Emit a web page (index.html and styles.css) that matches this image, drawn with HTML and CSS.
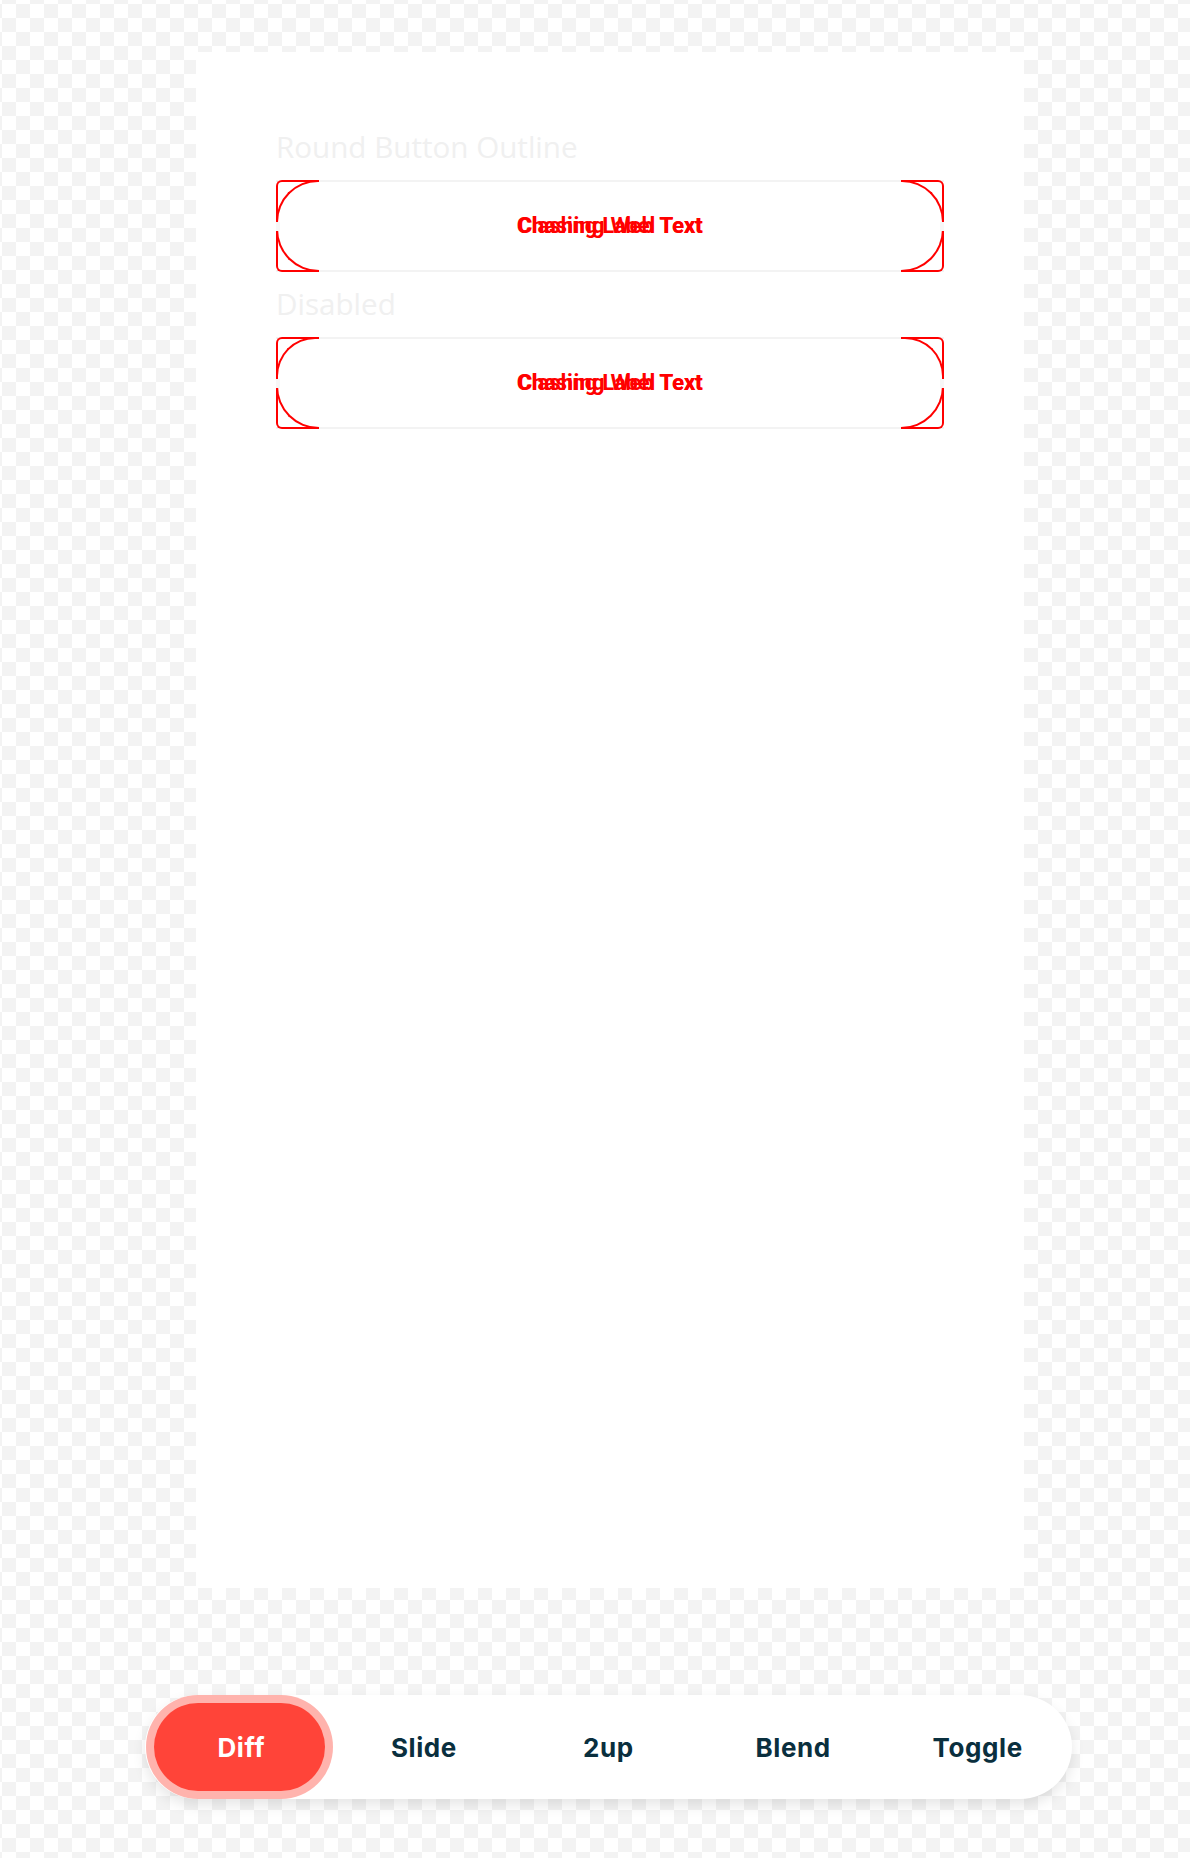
FILE: index.html
```html
<!DOCTYPE html>
<html lang="en">
<head>
<meta charset="utf-8">
<title>Round Button Outline – Diff</title>
<link rel="stylesheet" href="styles.css">
</head>
<body>
  <main class="stage">
    <section class="panel">
      <div class="label">Round Button Outline</div>
      <div class="btn">
        <span class="cap cap-l"><span class="gap"></span></span>
        <span class="cap cap-r"><span class="gap"></span></span>
        <span class="btn-text"><span>Clashing Web Text</span><span class="alt">Chasing Label Text</span></span>
      </div>
      <div class="label">Disabled</div>
      <div class="btn btn-disabled">
        <span class="cap cap-l"><span class="gap"></span></span>
        <span class="cap cap-r"><span class="gap"></span></span>
        <span class="btn-text"><span>Clashing Web Text</span><span class="alt">Chasing Label Text</span></span>
      </div>
    </section>
    <nav class="toolbar">
      <div class="tab tab-active">Diff</div>
      <div class="tab">Slide</div>
      <div class="tab">2up</div>
      <div class="tab">Blend</div>
      <div class="tab">Toggle</div>
    </nav>
  </main>
</body>
</html>
```
FILE: styles.css
```css
html {
  background-color: #ffffff;
  background-image: conic-gradient(#f3f3f3 25%, transparent 0 50%, #f3f3f3 0 75%, transparent 0);
  background-size: 28px 28px;
  background-position: 2px 4px;
  min-height: 100%;
}

body {
  margin: 0;
  font-family: "Open Sans", "Noto Sans", sans-serif;
}

.stage {
  padding-top: 52px;
  padding-bottom: 40px;
}

.panel {
  margin-left: 196px;
  width: 828px;
  height: 1536px;
  box-sizing: border-box;
  background: #ffffff;
  padding: 75px 80px 0 80px;
}

.label {
  font-size: 29.6px;
  line-height: 40px;
  color: #f0f0f0;
  margin-bottom: 13px;
}

.btn {
  position: relative;
  height: 88px;
  border-top: 2px solid #f3f3f3;
  border-bottom: 2px solid #f3f3f3;
  display: flex;
  align-items: center;
  justify-content: center;
  margin-bottom: 12px;
}

.cap {
  position: absolute;
  top: -2px;
  bottom: -2px;
  width: 43px;
}

.cap-l { left: 0; }
.cap-r { right: 0; }

.cap::before,
.cap::after {
  content: "";
  position: absolute;
  inset: 0;
  border: 2px solid #ff0000;
}

.cap-l::before {
  border-right: none;
  border-radius: 6px 0 0 6px;
}

.cap-l::after {
  border-right: none;
  border-radius: 43px 0 0 44px;
}

.cap-r::before {
  border-left: none;
  border-radius: 0 6px 6px 0;
}

.cap-r::after {
  border-left: none;
  border-radius: 0 43px 44px 0;
}

.gap {
  position: absolute;
  top: 50%;
  width: 4px;
  height: 9px;
  margin-top: -4px;
  background: #f7f7f7;
  z-index: 1;
}

.cap-l .gap { left: 0; }
.cap-r .gap { right: 0; }

.btn-disabled .cap-l::after { border-radius: 40px 0 0 44px; }
.btn-disabled .cap-r::after { border-radius: 0 40px 44px 0; }

.btn-text {
  display: grid;
  justify-items: center;
  font-family: "Roboto", "Liberation Sans", sans-serif;
  font-weight: 700;
  font-size: 22px;
  line-height: 26px;
  color: #ff0000;
  letter-spacing: 0.2px;
}

.btn-text span {
  grid-area: 1 / 1;
  white-space: nowrap;
}

.btn-text .alt {
  letter-spacing: -0.2px;
}

.toolbar {
  margin-top: 107px;
  margin-left: 145px;
  width: 927px;
  height: 104px;
  box-sizing: border-box;
  padding: 8px 2px;
  background: #ffffff;
  border-radius: 52px;
  box-shadow: 0 6px 14px rgba(0, 0, 0, 0.10);
  display: grid;
  grid-template-columns: repeat(5, 1fr);
}

.tab {
  display: flex;
  align-items: center;
  justify-content: center;
  font-family: "Inter", "Lato", sans-serif;
  font-weight: 700;
  font-size: 26px;
  letter-spacing: 0.6px;
  color: #0a2f3e;
  height: 88px;
}

.tab-active {
  margin: 0 7px;
  padding-left: 4px;
  background: #ff4439;
  color: #ffffff;
  border-radius: 44px;
  box-shadow: 0 0 0 8px #ffb3ad;
}
```
